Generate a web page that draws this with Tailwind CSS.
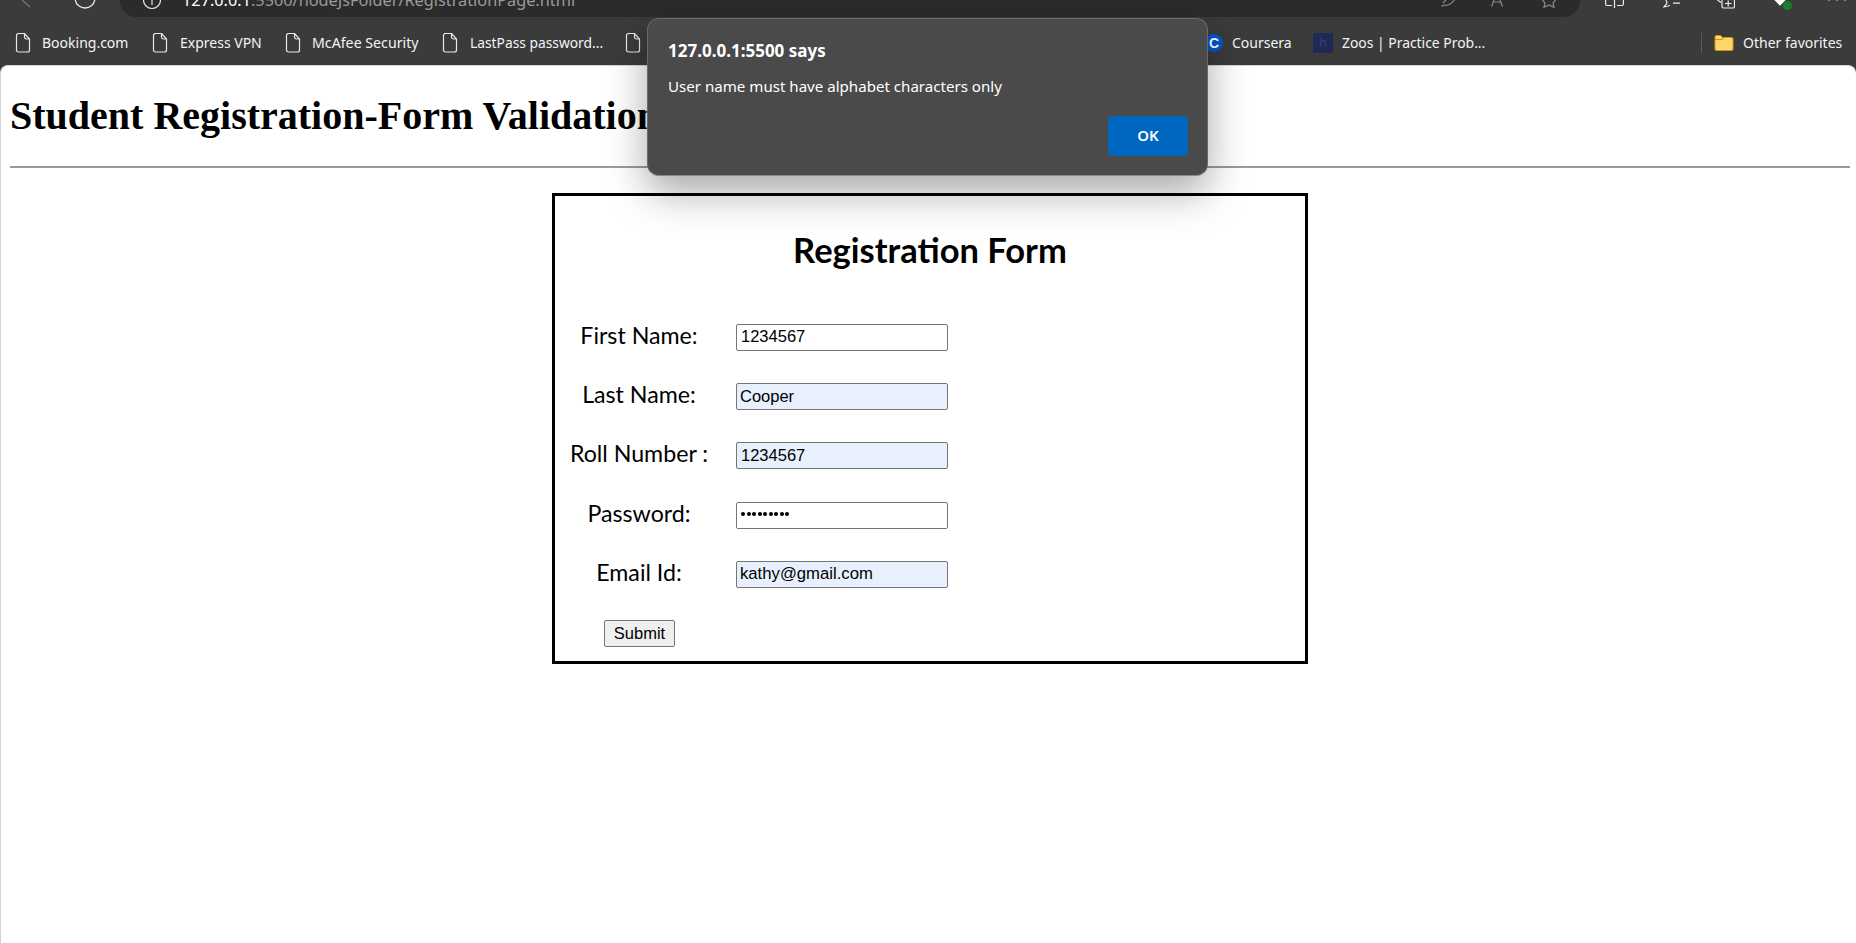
<!DOCTYPE html>
<html>
<head>
<meta charset="utf-8">
<script src="https://cdn.jsdelivr.net/npm/@tailwindcss/browser@4"></script>
</head>
<body class="h-[943px] overflow-hidden bg-[#3b3b3b]">
<div class="relative flex h-[943px] flex-col">
  <!-- toolbar strip -->
  <div class="flex h-[17px] shrink-0 items-start overflow-hidden font-['Noto_Sans'] text-[#d0d0d0]">
    <div class="flex h-[17px] w-[120px] shrink-0 items-start">
      <svg class="ml-[22px]" width="9" height="8" viewBox="0 0 9 8" fill="none" stroke="#7a7a7a" stroke-width="1.2"><path d="M0 0 L8 7"/></svg>
      <svg class="ml-[43px]" width="22" height="10" viewBox="0 0 22 10" fill="none" stroke="#e6e6e6" stroke-width="1.3"><path d="M1.2 0 A10 10 0 0 0 20.8 0"/></svg>
    </div>
    <div class="flex h-[17px] w-[1460px] shrink-0 items-start rounded-b-[16px] bg-[#2b2b2b]">
      <svg class="ml-[23px]" width="18" height="10" viewBox="0 0 18 10" fill="none" stroke="#e6e6e6" stroke-width="1.2"><circle cx="9" cy="0" r="8.5"/><path d="M9 0 V5"/></svg>
      <span class="relative top-[-11px] ml-[21px] text-[16.3px] leading-[22px] whitespace-nowrap"><span class="text-white">127.0.0.1</span><span class="text-[#9a9a9a]">:5500/nodeJsFolder/RegistrationPage.html</span></span>
      <div class="ml-auto flex items-start pr-[24px]">
        <svg width="14" height="7" viewBox="0 0 14 7" fill="none" stroke="#8a8a8a" stroke-width="1.2"><path d="M0.6 6.5 C2 4 4 6 7 5 C10 4 12 2 13.5 0 M2 3 L5 0"/></svg>
        <svg class="ml-[36px]" width="12" height="7" viewBox="0 0 12 7" fill="none" stroke="#8a8a8a" stroke-width="1.2"><path d="M0.6 6.5 L3 0 M11.4 6.5 L9 0 M2.5 2 H9.5"/></svg>
        <svg class="ml-[39px]" width="14" height="8" viewBox="0 0 14 8" fill="none" stroke="#8a8a8a" stroke-width="1.2"><path d="M0.5 0 L3 3 L2 7.3 L7 5 L12 7.3 L11 3 L13.5 0"/></svg>
      </div>
    </div>
    <div class="flex h-[17px] grow items-start">
      <svg class="ml-[25px]" width="19" height="8" viewBox="0 0 19 8" fill="none" stroke="#ececec" stroke-width="1.2"><path d="M0.6 0 V4 a1.5 1.5 0 0 0 1.5 1.5 H7 M18.4 0 V4 a1.5 1.5 0 0 1 -1.5 1.5 H12 M9.5 0 V8"/></svg>
      <svg class="ml-[39px]" width="17" height="8" viewBox="0 0 17 8" fill="none" stroke="#ececec" stroke-width="1.2"><path d="M3 0 L4 3 L1 7 L7 5.5 M10 3.2 H17"/></svg>
      <svg class="ml-[37px]" width="18" height="9" viewBox="0 0 18 9" fill="none" stroke="#ececec" stroke-width="1.2"><path d="M0.5 0 L4 2.5 M5 0 V6.5 a1.5 1.5 0 0 0 1.5 1.5 H16 a1.5 1.5 0 0 0 1.5 -1.5 V0 M11.2 0.5 V6.5 M8 3.5 H14.5"/></svg>
      <div class="relative ml-[40px] h-[10px] w-[17px]">
        <div class="absolute top-[-4px] left-[1px] h-[8px] w-[8px] rotate-45 bg-white"></div>
        <div class="absolute top-[1px] left-[8px] h-[9px] w-[9px] rounded-full bg-[#1a7f2c]"></div>
      </div>
      <div class="ml-[36px] flex h-[1px] gap-[6px]">
        <i class="h-[1px] w-[2px] bg-[#888]"></i><i class="h-[1px] w-[2px] bg-[#888]"></i><i class="h-[1px] w-[2px] bg-[#888]"></i>
      </div>
    </div>
  </div>

  <!-- favorites bar -->
  <div class="flex h-[48px] shrink-0 items-center pt-[3px] font-['Noto_Sans'] text-[14px] leading-[20px] text-[#f4f4f4]">
    <svg class="ml-[15px]" width="16" height="20" viewBox="0 0 16 20" fill="none" stroke="#e8e8e8" stroke-width="1.2"><path d="M1.5 2.5 a2 2 0 0 1 2 -2 H9.5 L14.5 6 V17 a2 2 0 0 1 -2 2 H3.5 a2 2 0 0 1 -2 -2 Z M9.5 0.5 V4 a2 2 0 0 0 2 2 H14.5"/></svg>
    <span class="ml-[11px] w-[86px] whitespace-nowrap">Booking.com</span>
    <svg class="ml-[24px]" width="16" height="20" viewBox="0 0 16 20" fill="none" stroke="#e8e8e8" stroke-width="1.2"><path d="M1.5 2.5 a2 2 0 0 1 2 -2 H9.5 L14.5 6 V17 a2 2 0 0 1 -2 2 H3.5 a2 2 0 0 1 -2 -2 Z M9.5 0.5 V4 a2 2 0 0 0 2 2 H14.5"/></svg>
    <span class="ml-[12px] w-[82px] whitespace-nowrap">Express VPN</span>
    <svg class="ml-[23px]" width="16" height="20" viewBox="0 0 16 20" fill="none" stroke="#e8e8e8" stroke-width="1.2"><path d="M1.5 2.5 a2 2 0 0 1 2 -2 H9.5 L14.5 6 V17 a2 2 0 0 1 -2 2 H3.5 a2 2 0 0 1 -2 -2 Z M9.5 0.5 V4 a2 2 0 0 0 2 2 H14.5"/></svg>
    <span class="ml-[11px] w-[108px] text-[14.2px] leading-[20px] whitespace-nowrap">McAfee Security</span>
    <svg class="ml-[22px]" width="16" height="20" viewBox="0 0 16 20" fill="none" stroke="#e8e8e8" stroke-width="1.2"><path d="M1.5 2.5 a2 2 0 0 1 2 -2 H9.5 L14.5 6 V17 a2 2 0 0 1 -2 2 H3.5 a2 2 0 0 1 -2 -2 Z M9.5 0.5 V4 a2 2 0 0 0 2 2 H14.5"/></svg>
    <span class="ml-[12px] w-[133px] text-[13.8px] leading-[20px] whitespace-nowrap">LastPass password...</span>
    <svg class="ml-[22px]" width="16" height="20" viewBox="0 0 16 20" fill="none" stroke="#e8e8e8" stroke-width="1.2"><path d="M1.5 2.5 a2 2 0 0 1 2 -2 H9.5 L14.5 6 V17 a2 2 0 0 1 -2 2 H3.5 a2 2 0 0 1 -2 -2 Z M9.5 0.5 V4 a2 2 0 0 0 2 2 H14.5"/></svg>
    <div class="ml-[564px] flex h-[18px] w-[18px] shrink-0 items-center justify-center rounded-full bg-[#0056d2] font-['Liberation_Sans'] text-[14px] leading-none font-bold text-white">C</div>
    <span class="ml-[9px] w-[59px] whitespace-nowrap">Coursera</span>
    <div class="ml-[22px] flex h-[20px] w-[20px] shrink-0 items-center justify-center rounded-[2px] bg-[#1e2a55] text-[12px] leading-none text-[#34426f]">h</div>
    <span class="ml-[9px] w-[143px] text-[13.9px] leading-[20px] whitespace-nowrap">Zoos | Practice Prob...</span>
    <div class="ml-[216px] h-[20px] w-px bg-[#5a5a5a]"></div>
    <svg class="ml-[12px]" width="20" height="18" viewBox="0 0 20 18"><path d="M1 3 a1.5 1.5 0 0 1 1.5 -1.5 H6.5 L8.5 3.5 H17.5 a1.5 1.5 0 0 1 1.5 1.5 V15 a1.5 1.5 0 0 1 -1.5 1.5 H2.5 a1.5 1.5 0 0 1 -1.5 -1.5 Z" fill="#fcd669" stroke="#c9981f"/><path d="M1 5.5 H8.5 L9.5 3.5" fill="none" stroke="#c9981f"/></svg>
    <span class="ml-[9px] whitespace-nowrap">Other favorites</span>
  </div>

  <!-- page -->
  <div class="grow overflow-hidden rounded-t-[8px] border-t border-l border-[#d4d4d4] bg-white pr-[6px] pl-[9px]">
    <h1 class="mt-[27px] mb-[27px] font-['Liberation_Serif'] text-[40px] leading-[46px] font-bold whitespace-nowrap text-black">Student Registration-Form Validation</h1>
    <div class="h-[2px] w-full bg-[#9a9a9a]"></div>
    <form class="mx-auto mt-[25px] h-[471px] w-[756px] border-[3px] border-black font-['Lato'] text-black">
      <h2 class="mt-[34px] text-center text-[34.5px] leading-[40px] font-bold">Registration Form</h2>
      <div class="mt-[54px] flex flex-col">
        <div class="flex h-[59.2px] items-start gap-[13px]">
          <span class="mt-[-3px] w-[168px] text-center text-[23.2px] leading-[28px]">First Name:</span>
          <div class="flex h-[27px] w-[212px] items-center rounded-[2px] border border-[#767676] bg-white px-[4px] pb-[2px] font-['Liberation_Sans'] text-[16.5px]">1234567</div>
        </div>
        <div class="flex h-[59.2px] items-start gap-[13px]">
          <span class="mt-[-3px] w-[168px] text-center text-[23.2px] leading-[28px]">Last Name:</span>
          <div class="flex h-[27px] w-[212px] items-center rounded-[2px] border border-[#767676] bg-[#e8f0fe] px-[3px] font-['Liberation_Sans'] text-[16.5px]">Cooper</div>
        </div>
        <div class="flex h-[59.2px] items-start gap-[13px]">
          <span class="mt-[-3px] w-[168px] text-center text-[23.2px] leading-[28px] whitespace-nowrap">Roll Number :</span>
          <div class="flex h-[27px] w-[212px] items-center rounded-[2px] border border-[#767676] bg-[#e8f0fe] px-[4px] pb-[2px] font-['Liberation_Sans'] text-[16.5px]">1234567</div>
        </div>
        <div class="flex h-[59.2px] items-start gap-[13px]">
          <span class="mt-[-3px] w-[168px] text-center text-[23.2px] leading-[28px]">Password:</span>
          <div class="flex h-[27px] w-[212px] items-center gap-[1.55px] rounded-[2px] border border-[#767676] bg-white px-[4px] pb-[2px]">
            <i class="h-[4px] w-[4px] rounded-full bg-black"></i><i class="h-[4px] w-[4px] rounded-full bg-black"></i><i class="h-[4px] w-[4px] rounded-full bg-black"></i><i class="h-[4px] w-[4px] rounded-full bg-black"></i><i class="h-[4px] w-[4px] rounded-full bg-black"></i><i class="h-[4px] w-[4px] rounded-full bg-black"></i><i class="h-[4px] w-[4px] rounded-full bg-black"></i><i class="h-[4px] w-[4px] rounded-full bg-black"></i><i class="h-[4px] w-[4px] rounded-full bg-black"></i>
          </div>
        </div>
        <div class="flex h-[59.2px] items-start gap-[13px]">
          <span class="mt-[-3px] w-[168px] text-center text-[23.2px] leading-[28px]">Email Id:</span>
          <div class="flex h-[27px] w-[212px] items-center rounded-[2px] border border-[#767676] bg-[#e8f0fe] px-[3px] pb-[2px] font-['Liberation_Sans'] text-[16.7px]">kathy@gmail.com</div>
        </div>
        <div class="flex pl-[49px]">
          <button type="button" class="flex h-[27px] w-[71px] items-center justify-center rounded-[2px] border border-[#767676] bg-[#efefef] font-['Liberation_Sans'] text-[16.5px]">Submit</button>
        </div>
      </div>
    </form>
  </div>

  <!-- alert dialog -->
  <div class="absolute top-[18px] left-[647px] flex h-[158px] w-[561px] flex-col rounded-[12px] border border-[#6a6a6a] border-b-[#8a8a8a] bg-[#4a4a4a] font-['Noto_Sans'] text-white shadow-[0_16px_40px_rgba(0,0,0,0.35)]">
    <div class="mt-[21px] ml-[20px] text-[17px] leading-[22px] font-bold">127.0.0.1:5500 says</div>
    <div class="mt-[14px] ml-[20px] text-[15.1px] leading-[20px]">User name must have alphabet characters only</div>
    <button type="button" class="mt-[20px] mr-[19px] ml-auto h-[40px] w-[80px] rounded-[4px] bg-[#0067c0] pb-[2px] text-[15px] font-semibold text-white">OK</button>
  </div>
</div>
</body>
</html>
